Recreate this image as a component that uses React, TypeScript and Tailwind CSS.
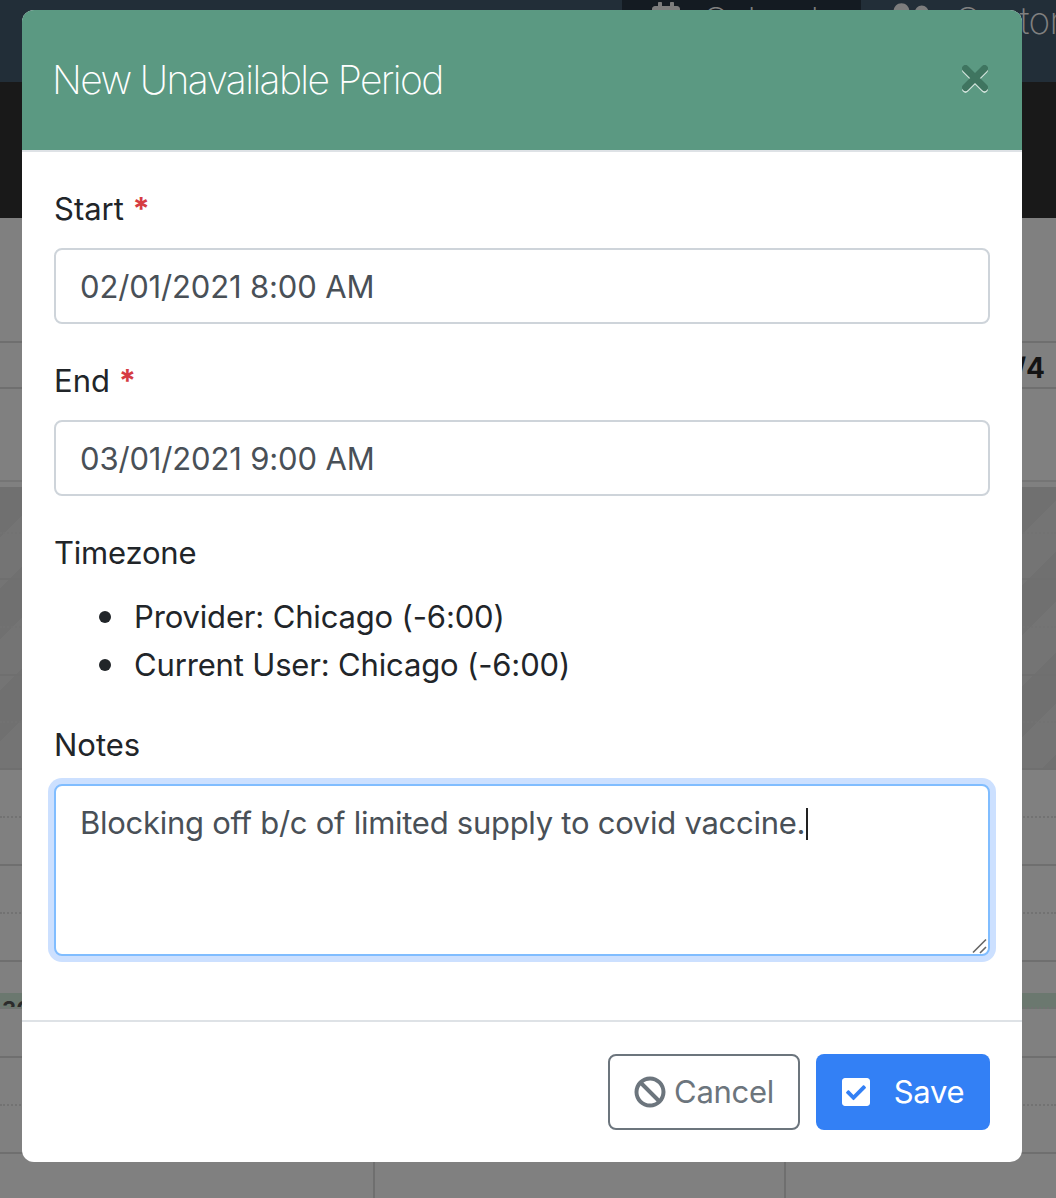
import React from "react";
import { FaBan, FaCheckSquare, FaCalendar, FaUserFriends } from "react-icons/fa";

const font = "font-['Inter','Liberation_Sans',sans-serif]";

function HourRow({ h = "h-[96px]" }: { h?: string }) {
  return (
    <div className={`flex flex-col border-b-2 border-[#6f6f6f] ${h}`}>
      <div className="flex-1 border-b-2 border-dotted border-[#727272]" />
      <div className="flex-1" />
    </div>
  );
}

function Field({ label, value, mt }: { label: string; value: string; mt?: string }) {
  return (
    <div className={mt}>
      <label className="block text-[31px] leading-[48px] text-[#212529]">
        {label} <span className="font-bold text-[#d63c42]">*</span>
      </label>
      <input
        readOnly
        defaultValue={value}
        className="mt-[15px] block h-[76px] w-full rounded-[8px] border-2 border-[#ced4da] bg-white px-[24px] text-[31px] tracking-[-0.15px] text-[#495057] outline-none"
      />
    </div>
  );
}

function Bullet({ children }: { children: React.ReactNode }) {
  return (
    <li className="relative before:absolute before:left-[-35px] before:top-[18px] before:h-[12px] before:w-[12px] before:rounded-full before:bg-[#212529] before:content-['']">
      {children}
    </li>
  );
}

export default function App() {
  return (
    <div className={`relative h-[1198px] w-[1056px] overflow-hidden bg-[#808080] ${font}`}>
      <div className="flex h-[82px] bg-[#222e38] pl-[622px] text-[37px] font-extralight tracking-[-0.6px] text-[#808080]">
        <div className="flex h-full w-[239px] shrink-0 gap-[22px] bg-[#141b22] pl-[30px]">
          <FaCalendar className="mt-[2px] h-[32px] w-[28px] shrink-0 text-[#7d7d7d]" />
          <span className="leading-[41px]">Calendar</span>
        </div>
        <div className="flex shrink-0 gap-[21px] pl-[27px]">
          <FaUserFriends className="mt-[1px] h-[36px] w-[45px] shrink-0 text-[#7d7d7d]" />
          <span className="leading-[41px]">Customers</span>
        </div>
      </div>
      <div className="h-[136px] bg-[#191919]" />
      <div className="relative">
        <div className="h-[125px] border-b-2 border-[#6f6f6f]" />
        <div className="relative h-[46px] border-b-2 border-[#6f6f6f]">
          <span className="absolute right-[11px] top-[9px] text-[28px] font-bold leading-[32px] text-[#141414]">/4</span>
        </div>
        <div className="h-[93px] border-b-2 border-[#757575]" />
        <div className="h-[5px]" />
        <div className="bg-[repeating-linear-gradient(135deg,#707070_0px,#707070_36px,#747474_36px,#747474_72px)]">
          <HourRow h="h-[93px]" />
          <HourRow />
          <HourRow h="h-[94px]" />
        </div>
        <HourRow />
        <HourRow />
        <div className="h-[96px] border-b-2 border-[#6f6f6f] pt-[31px]">
          <div className="h-[16px] overflow-hidden border-b-2 border-dotted border-[#727272] bg-[#6b786f] pl-[2px] pt-[1px] text-[22px] font-bold leading-[30px] text-[#2b2b2b]">
            30
          </div>
        </div>
        <HourRow />
        <div className="flex h-[46px]">
          <div className="w-[375px] border-r-2 border-[#6f6f6f]" />
          <div className="w-[411px] border-r-2 border-[#6f6f6f]" />
        </div>
      </div>

      <div className="absolute left-[22px] top-[10px] flex w-[1000px] flex-col overflow-hidden rounded-[12px] bg-white">
        <div className="flex h-[142px] items-center justify-between border-b-2 border-[#dee2e6] bg-[#5b9982] pl-[30px] pr-[34px]">
          <h2 className="whitespace-nowrap text-[39px] font-extralight leading-[48px] tracking-[-1.6px] text-white">New Unavailable Period</h2>
          <svg viewBox="0 0 26 28" className="mb-[2px] h-[28px] w-[26px]">
            <path d="M3.5 5.5 L22.5 24.5 M22.5 5.5 L3.5 24.5" stroke="#d5e5de" strokeWidth="6.5" strokeLinecap="round" />
            <path d="M3.5 3.5 L22.5 22.5 M22.5 3.5 L3.5 22.5" stroke="#3f7560" strokeWidth="7" strokeLinecap="round" />
          </svg>
        </div>
        <div className="flex h-[870px] flex-col border-b-2 border-[#dee2e6] px-[32px] pt-[33px]">
          <Field label="Start" value="02/01/2021 8:00 AM" />
          <Field label="End" value="03/01/2021 9:00 AM" mt="mt-[33px]" />
          <div className="mt-[33px] text-[31px] leading-[48px] tracking-[-0.2px] text-[#212529]">Timezone</div>
          <ul className="mt-[16px] list-none pl-[80px] text-[31px] leading-[48px] tracking-[-0.16px] text-[#212529]">
            <Bullet>Provider: Chicago (-6:00)</Bullet>
            <Bullet>Current User: Chicago (-6:00)</Bullet>
          </ul>
          <label className="mt-[32px] block text-[31px] leading-[48px] text-[#212529]">Notes</label>
          <div className="relative mt-[15px]">
            <textarea
              readOnly
              defaultValue="Blocking off b/c of limited supply to covid vaccine."
              className="block h-[172px] w-full resize-none rounded-[8px] border-2 border-[#80bdff] bg-white px-[24px] py-[13px] text-[31px] leading-[48px] tracking-[-0.27px] text-[#495057] shadow-[0_0_0_6px_#cce0ff] outline-none"
            />
            <span className="absolute left-[752px] top-[24px] h-[32px] w-[2px] bg-[#222]" />
            <svg viewBox="0 0 16 16" className="absolute bottom-[2px] right-[2px] h-[16px] w-[16px]">
              <path d="M1 14.5 L14 1.5 M8 15 L14 9" stroke="#666" strokeWidth="1.6" fill="none" />
            </svg>
          </div>
        </div>
        <div className="flex h-[140px] items-start justify-end gap-[16px] px-[32px] pt-[32px]">
          <button className="flex h-[76px] w-[192px] items-center justify-center gap-[8px] rounded-[8px] border-2 border-[#6c757d] bg-white text-[31px] tracking-[-0.3px] text-[#6c757d]">
            <FaBan className="h-[32px] w-[32px]" />
            Cancel
          </button>
          <button className="flex h-[76px] w-[174px] items-center justify-center gap-[24px] rounded-[8px] bg-[#3380f5] text-[31px] tracking-[-0.3px] text-white">
            <FaCheckSquare className="h-[32px] w-[28px]" />
            Save
          </button>
        </div>
      </div>
    </div>
  );
}
